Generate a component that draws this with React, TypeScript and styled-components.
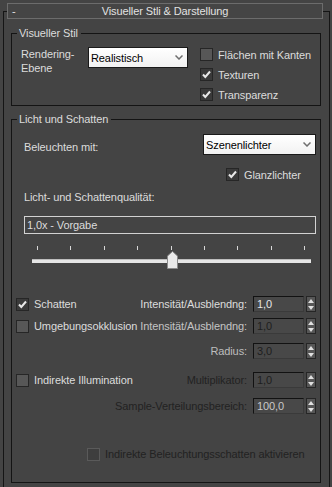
import styled, { createGlobalStyle } from "styled-components";

const GlobalStyle = createGlobalStyle`
  html, body {
    margin: 0;
    padding: 0;
    background: #444444;
  }
  body {
    font-family: "Liberation Sans", Arial, sans-serif;
    font-size: 11px;
    letter-spacing: -0.1px;
    color: #dcdcdc;
  }
`;

const Page = styled.div`
  width: 332px;
  height: 487px;
  box-sizing: border-box;
  padding-top: 3px;
  overflow: hidden;
  background: #444444;
`;

const Rollout = styled.fieldset`
  margin: 0 2px 0 3px;
  padding: 0 0 4px 0;
  min-width: 0;
  border: 1px solid #151515;
`;

const RolloutHeader = styled.legend`
  margin-left: 3px;
  padding: 0;
  width: 316px;
  height: 16px;
  box-sizing: border-box;
  border: 1px solid #6c6c6c;
  background: #454545;
  display: grid;
  grid-template-columns: 20px 1fr 20px;
  align-items: center;
  line-height: 14px;
  color: #e2e2e2;
`;

const Collapse = styled.span`
  padding-left: 4px;
`;

const Title = styled.span`
  text-align: center;
`;

const Group = styled.fieldset<{ $mt: number }>`
  margin: ${(p) => p.$mt}px 8px 0 7px;
  padding: 0;
  min-width: 0;
  border: 1px solid #141414;
`;

const GroupLegend = styled.legend`
  margin-left: 5px;
  padding: 0 3px 0 2px;
  line-height: 14px;
  color: #dcdcdc;
`;

const StyleBody = styled.div`
  display: flex;
  align-items: flex-start;
  padding: 7px 0 3px 9px;
`;

const RenderLabel = styled.div`
  width: 67px;
  line-height: 14px;
`;

const Dropdown = styled.div<{ $w: number }>`
  width: ${(p) => p.$w}px;
  height: 21px;
  box-sizing: border-box;
  border: 1px solid #1a1a1a;
  background: linear-gradient(#ffffff, #f2f2f2);
  color: #000;
  display: flex;
  align-items: center;
  justify-content: space-between;
  padding: 0 4px 0 2px;
`;

const CheckColumn = styled.div`
  display: flex;
  flex-direction: column;
  gap: 5px;
  margin-left: 12px;
`;

const CheckRow = styled.label<{ $ml?: number; $dim?: boolean }>`
  display: flex;
  align-items: center;
  gap: 5px;
  height: 15px;
  margin-left: ${(p) => p.$ml ?? 0}px;
  color: ${(p) => (p.$dim ? "#222222" : "#dcdcdc")};
  white-space: nowrap;
`;

const Box = styled.span<{ $on?: boolean; $dim?: boolean }>`
  width: 13px;
  height: 13px;
  box-sizing: border-box;
  flex: none;
  border: 1px solid ${(p) => (p.$dim ? "#5a5a5a" : "#262626")};
  background: ${(p) => (p.$dim ? "#3e3e3e" : p.$on ? "#3a3a3a" : "#575757")};
  display: flex;
  align-items: center;
  justify-content: center;
`;

const LightBody = styled.div`
  display: flex;
  flex-direction: column;
  padding: 8px 4px 0 4px;
  height: 348px;
`;

const Indent = styled.div<{ $mt?: number }>`
  margin: ${(p) => p.$mt ?? 0}px 0 0 8px;
`;

const LightRow = styled(Indent)`
  display: flex;
  align-items: flex-end;
  justify-content: space-between;
`;

const RowLabel = styled.span`
  line-height: 14px;
  padding-bottom: 1px;
`;

const QualityField = styled.div`
  height: 18px;
  box-sizing: border-box;
  border: 1px solid #d2d2d2;
  padding: 0 2px;
  line-height: 16px;
  color: #dcdcdc;
`;

const Slider = styled.div`
  margin: 12px 5px 0 16px;
  position: relative;
`;

const Ticks = styled.div`
  display: flex;
  justify-content: space-between;
  padding: 0 6px 0 5px;
  height: 4px;
`;

const Tick = styled.span`
  width: 1px;
  height: 4px;
  background: #d8d8d8;
`;

const Track = styled.div`
  margin-top: 9px;
  height: 4px;
  background: #e6e6e6;
  border-top: 1px solid #bdbdbd;
  box-sizing: border-box;
`;

const Thumb = styled.svg`
  position: absolute;
  left: calc(50% - 5px);
  top: 5px;
`;

const ParamRow = styled.div<{ $mt: number }>`
  display: flex;
  align-items: center;
  height: 16px;
  margin-top: ${(p) => p.$mt}px;
`;

const ParamLeft = styled.div`
  flex: 1;
  display: flex;
  min-width: 0;
`;

const ParamLabel = styled.span<{ $tone: string }>`
  color: ${(p) => p.$tone};
  margin: 0 6px 0 4px;
  white-space: nowrap;
`;

const Field = styled.div<{ $tone: string }>`
  width: 51px;
  height: 16px;
  box-sizing: border-box;
  border: 1px solid #121212;
  border-right-color: #3a3a3a;
  border-bottom-color: #3a3a3a;
  background: #484848;
  color: ${(p) => p.$tone};
  line-height: 14px;
  padding-left: 3px;
`;

const Spinner = styled.div`
  width: 10px;
  height: 16px;
  margin-left: 2px;
  box-sizing: border-box;
  border: 1px solid #262626;
  background: #565656;
  display: flex;
  flex-direction: column;
  align-items: center;
  justify-content: space-around;
`;

const Check = () => (
  <svg width="11" height="11" viewBox="0 0 11 11">
    <path d="M2 5.5 L4.3 8 L9 2.5" fill="none" stroke="#e8e8e8" strokeWidth="2" />
  </svg>
);

const Chevron = () => (
  <svg width="8" height="5" viewBox="0 0 8 5">
    <path d="M0.5 0.5 L4 4 L7.5 0.5" fill="none" stroke="#6f6f6f" strokeWidth="1.5" />
  </svg>
);

const Arrows = () => (
  <>
    <svg width="6" height="4" viewBox="0 0 6 4">
      <path d="M0 4 L3 0 L6 4 Z" fill="#e0e0e0" />
    </svg>
    <svg width="6" height="4" viewBox="0 0 6 4">
      <path d="M0 0 L3 4 L6 0 Z" fill="#e0e0e0" />
    </svg>
  </>
);

type CheckProps = { label: string; on?: boolean; dim?: boolean; ml?: number };

const CheckItem = ({ label, on, dim, ml }: CheckProps) => (
  <CheckRow $ml={ml} $dim={dim}>
    <Box $on={on} $dim={dim}>{on && <Check />}</Box>
    {label}
  </CheckRow>
);

type Param = {
  mt: number;
  check?: CheckProps;
  label: string;
  labelTone: string;
  value: string;
  valueTone: string;
};

const params: Param[] = [
  { mt: 33, check: { label: "Schatten", on: true }, label: "Intensität/Ausblendng:", labelTone: "#dcdcdc", value: "1,0", valueTone: "#e6e6e6" },
  { mt: 6, check: { label: "Umgebungsokklusion" }, label: "Intensität/Ausblendng:", labelTone: "#c4c4c4", value: "1,0", valueTone: "#1e1e1e" },
  { mt: 9, label: "Radius:", labelTone: "#bdbdbd", value: "3,0", valueTone: "#1e1e1e" },
  { mt: 13, check: { label: "Indirekte Illumination" }, label: "Multiplikator:", labelTone: "#222222", value: "1,0", valueTone: "#1e1e1e" },
  { mt: 10, label: "Sample-Verteilungsbereich:", labelTone: "#222222", value: "100,0", valueTone: "#c8c8c8" },
];

export default function App() {
  return (
    <Page>
      <GlobalStyle />
      <Rollout>
        <RolloutHeader>
          <Collapse>-</Collapse>
          <Title>Visueller Stli &amp; Darstellung</Title>
          <span />
        </RolloutHeader>

        <Group $mt={7}>
          <GroupLegend>Visueller Stil</GroupLegend>
          <StyleBody>
            <RenderLabel>
              Rendering-
              <br />
              Ebene
            </RenderLabel>
            <Dropdown $w={100}>
              Realistisch
              <Chevron />
            </Dropdown>
            <CheckColumn>
              <CheckItem label="Flächen mit Kanten" />
              <CheckItem label="Texturen" on />
              <CheckItem label="Transparenz" on />
            </CheckColumn>
          </StyleBody>
        </Group>

        <Group $mt={6}>
          <GroupLegend>Licht und Schatten</GroupLegend>
          <LightBody>
            <LightRow>
              <RowLabel>Beleuchten mit:</RowLabel>
              <Dropdown $w={113}>
                Szenenlichter
                <Chevron />
              </Dropdown>
            </LightRow>
            <Indent $mt={12}>
              <CheckItem label="Glanzlichter" on ml={202} />
            </Indent>
            <Indent $mt={8}>
              <RowLabel>Licht- und Schattenqualität:</RowLabel>
            </Indent>
            <Indent $mt={12}>
              <QualityField>1,0x - Vorgabe</QualityField>
            </Indent>
            <Slider>
              <Ticks>
                {Array.from({ length: 9 }, (_, i) => (
                  <Tick key={i} />
                ))}
              </Ticks>
              <Track />
              <Thumb width="11" height="18" viewBox="0 0 11 18">
                <path d="M0.5 17.5 V5 L5.5 0.5 L10.5 5 V17.5 Z" fill="#e9e9e9" stroke="#8a8a8a" />
              </Thumb>
            </Slider>

            {params.map((p, i) => (
              <ParamRow key={i} $mt={p.mt}>
                <ParamLeft>{p.check && <CheckItem {...p.check} />}</ParamLeft>
                <ParamLabel $tone={p.labelTone}>{p.label}</ParamLabel>
                <Field $tone={p.valueTone}>{p.value}</Field>
                <Spinner>
                  <Arrows />
                </Spinner>
              </ParamRow>
            ))}

            <ParamRow $mt={32}>
              <CheckItem label="Indirekte Beleuchtungsschatten aktivieren" dim ml={71} />
            </ParamRow>
          </LightBody>
        </Group>
      </Rollout>
    </Page>
  );
}
